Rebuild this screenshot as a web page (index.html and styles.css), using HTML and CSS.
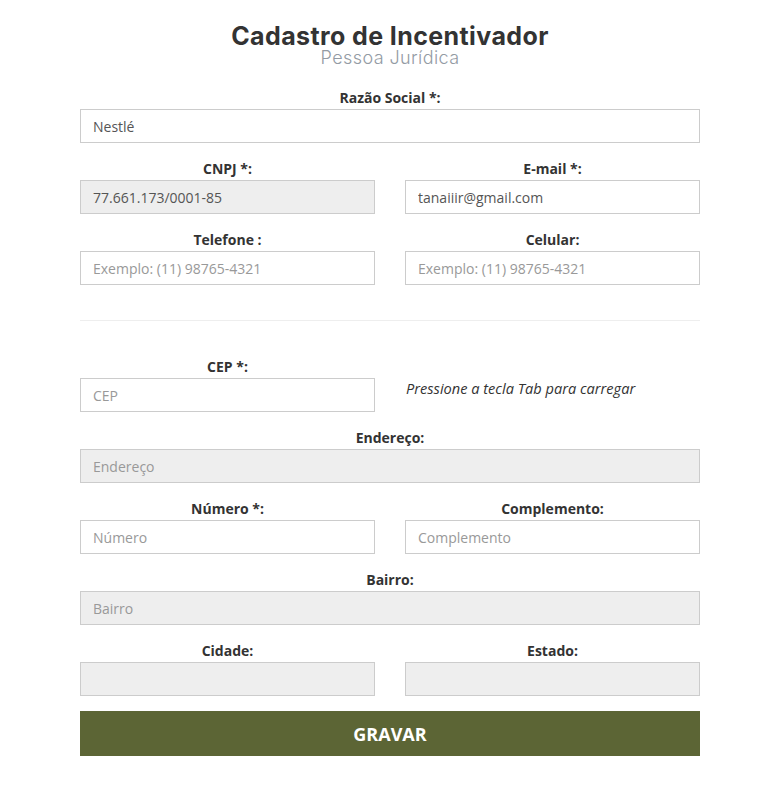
FILE: index.html
```html
<!DOCTYPE html>
<html lang="pt-BR">
<head>
<meta charset="utf-8">
<title>Cadastro de Incentivador</title>
<link rel="stylesheet" href="styles.css">
</head>
<body>
<main class="page">
  <header class="head">
    <h1 class="title">Cadastro de Incentivador</h1>
    <p class="subtitle">Pessoa Jurídica</p>
  </header>
  <form class="form">
    <div class="field">
      <label class="label">Razão Social *:</label>
      <input class="input" type="text" value="Nestlé">
    </div>
    <div class="row">
      <div class="field">
        <label class="label">CNPJ *:</label>
        <input class="input ro" type="text" value="77.661.173/0001-85" readonly>
      </div>
      <div class="field">
        <label class="label">E-mail *:</label>
        <input class="input" type="text" value="tanaiiir@gmail.com">
      </div>
    </div>
    <div class="row">
      <div class="field">
        <label class="label">Telefone :</label>
        <input class="input" type="text" placeholder="Exemplo: (11) 98765-4321">
      </div>
      <div class="field">
        <label class="label">Celular:</label>
        <input class="input" type="text" placeholder="Exemplo: (11) 98765-4321">
      </div>
    </div>
    <hr class="sep">
    <div class="row">
      <div class="field">
        <label class="label">CEP *:</label>
        <input class="input" type="text" placeholder="CEP">
      </div>
      <div class="hint"><em>Pressione a tecla Tab para carregar</em></div>
    </div>
    <div class="field">
      <label class="label">Endereço:</label>
      <input class="input ro" type="text" placeholder="Endereço" readonly>
    </div>
    <div class="row">
      <div class="field">
        <label class="label">Número *:</label>
        <input class="input" type="text" placeholder="Número">
      </div>
      <div class="field">
        <label class="label">Complemento:</label>
        <input class="input" type="text" placeholder="Complemento">
      </div>
    </div>
    <div class="field">
      <label class="label">Bairro:</label>
      <input class="input ro" type="text" placeholder="Bairro" readonly>
    </div>
    <div class="row">
      <div class="field">
        <label class="label">Cidade:</label>
        <input class="input ro" type="text" readonly>
      </div>
      <div class="field">
        <label class="label">Estado:</label>
        <input class="input ro" type="text" readonly>
      </div>
    </div>
    <button class="btn" type="button">GRAVAR</button>
  </form>
</main>
</body>
</html>
```
FILE: styles.css
```css
* { box-sizing: border-box; }
html, body { margin: 0; padding: 0; background: #fff; }
body { font-family: "Open Sans", "Liberation Sans", sans-serif; color: #333; padding-left: 7px; }
.page { width: 620px; margin: 0 auto; padding-top: 23px; }
.head { text-align: center; }
.title { margin: 0; font-family: Inter, "Liberation Sans", sans-serif; font-weight: 700; font-size: 25px; line-height: 26px; color: #333; letter-spacing: 0.4px; }
.subtitle { margin: 0; font-family: Inter, "Liberation Sans", sans-serif; font-weight: 300; font-size: 18px; line-height: 18px; color: #939ba4; letter-spacing: 0.4px; }
.form { display: flex; flex-direction: column; gap: 16px; margin-top: 21px; }
.row { display: grid; grid-template-columns: 1fr 1fr; column-gap: 30px; }
.field { display: flex; flex-direction: column; gap: 1px; }
.label { display: block; text-align: center; font-weight: 700; font-size: 14px; line-height: 20px; color: #333; }
.input { display: block; width: 100%; height: 34px; border: 1px solid #ccc; background: #fff; padding: 0 12px; font-family: "Open Sans", sans-serif; font-size: 14px; color: #555; outline: none; border-radius: 0; }
.input::placeholder { color: #999; }
.input.ro { background: #eee; }
.hint { align-self: end; height: 34px; padding-left: 1px; font-size: 14.6px; line-height: 20px; color: #333; }
.sep { margin: 19px 0 20px; border: 0; border-top: 1px solid #eee; height: 0; }
.btn { height: 45px; border: 0; background: #5c6535; color: #fff; font-family: "Open Sans", sans-serif; font-weight: 700; font-size: 18px; margin-top: -1px; cursor: pointer; }
```
